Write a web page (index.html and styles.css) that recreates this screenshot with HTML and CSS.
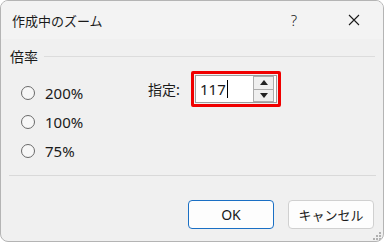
FILE: index.html
```html
<!DOCTYPE html>
<html>
<head>
  <title>作成中のズーム</title>
  <link rel="stylesheet" href="styles.css">
</head>
<body>

  <div class="window">
    <div class="titlebar">
      <span class="title">作成中のズーム</span>
      <span class="help">?</span>
      <span class="close">
        <svg width="12" height="12" viewBox="0 0 12 12"><path d="M1 1L11 11M11 1L1 11" stroke="#1a1a1a" stroke-width="1.1"/></svg>
      </span>
    </div>

    <div class="group-head">
      <span>倍率</span>
      <div class="group-line"></div>
    </div>

    <div class="options">
      <div class="radios">
        <div class="radio-row"><span class="radio"></span>200%</div>
        <div class="radio-row"><span class="radio"></span>100%</div>
        <div class="radio-row"><span class="radio"></span>75%</div>
      </div>
      <div class="custom">
        <span class="custom-label">指定:</span>
        <div class="highlight">
          <div class="spin">
            <div class="spin-text">117<span class="caret"></span></div>
            <div class="spin-btns">
              <div class="spin-btn"><svg width="8" height="5" viewBox="0 0 8 5"><path d="M0 5L4 0L8 5Z" fill="#222"/></svg></div>
              <div class="spin-btn"><svg width="8" height="5" viewBox="0 0 8 5"><path d="M0 0L4 5L8 0Z" fill="#222"/></svg></div>
            </div>
          </div>
        </div>
      </div>
    </div>

    <div class="separator"></div>

    <div class="buttons">
      <button class="btn primary">OK</button>
      <button class="btn">キャンセル</button>
    </div>

    <div class="grip">
      <svg width="10" height="10" viewBox="0 0 10 10" fill="#b0b0b0">
        <rect x="7" y="1" width="2" height="2"/>
        <rect x="4" y="4" width="2" height="2"/><rect x="7" y="4" width="2" height="2"/>
        <rect x="1" y="7" width="2" height="2"/><rect x="4" y="7" width="2" height="2"/><rect x="7" y="7" width="2" height="2"/>
      </svg>
    </div>
  </div>

</body>
</html>
```

FILE: styles.css
```css
body {
  margin: 0;
  font-family: 'Noto Sans', 'Noto Sans CJK JP', sans-serif;
  color: #1a1a1a;
  background: #ffffff;
}

.window {
  position: relative;
  width: 384px;
  height: 242px;
  box-sizing: border-box;
  border: 1px solid #b4b4b4;
  border-radius: 8px;
  background: #f0f0f0;
  overflow: hidden;
}

.titlebar {
  display: flex;
  align-items: center;
  height: 38px;
  padding-left: 11px;
  background: #f3f3f3;
}

.title {
  flex: 1;
  font-size: 13px;
  font-family: 'Noto Sans CJK JP', sans-serif;
}

.help {
  width: 46px;
  margin-right: 14px;
  text-align: center;
  font-size: 15px;
  font-weight: 300;
}

.close {
  display: flex;
  justify-content: center;
  align-items: center;
  width: 46px;
  margin-right: 6px;
}

.group-head {
  display: flex;
  align-items: center;
  height: 20px;
  margin-top: 7px;
  padding-left: 9px;
  padding-right: 8px;
  font-size: 14px;
  font-family: 'Noto Sans CJK JP', sans-serif;
}

.group-line {
  flex: 1;
  height: 1px;
  margin-left: 6px;
  background: #dcdcdc;
}

.options {
  display: flex;
  height: 104px;
  margin-top: 5px;
}

.radios {
  width: 127px;
  padding-top: 7px;
  padding-left: 20px;
}

.radio-row {
  display: flex;
  align-items: center;
  height: 29px;
  font-size: 15px;
}

.radio {
  width: 12px;
  height: 12px;
  margin-right: 10px;
  border: 1.3px solid #6a6a6a;
  border-radius: 50%;
  background: #f7f7f7;
}

.custom {
  display: flex;
  align-items: flex-start;
}

.custom-label {
  margin-top: 8px;
  width: 43px;
  font-size: 14px;
  font-family: 'Noto Sans CJK JP', sans-serif;
}

.highlight {
  width: 90px;
  height: 36px;
  box-sizing: border-box;
  border: 3px solid #f00000;
  border-radius: 2px;
  padding: 1px;
}

.spin {
  display: flex;
  align-items: center;
  height: 100%;
  box-sizing: border-box;
  border: 1px solid #9c9c9c;
  background: #ffffff;
  padding-left: 4px;
  padding-right: 2px;
}

.spin-text {
  flex: 1;
  display: flex;
  align-items: center;
  font-size: 15px;
}

.caret {
  display: inline-block;
  width: 1px;
  height: 18px;
  margin-left: 1px;
  background: #000000;
}

.spin-btns {
  display: flex;
  flex-direction: column;
  width: 19px;
  height: 24px;
  border: 1px solid #adadad;
}

.spin-btn {
  flex: 1;
  display: flex;
  justify-content: center;
  align-items: center;
  background: #efefef;
}

.spin-btn + .spin-btn {
  border-top: 1px solid #adadad;
}

.separator {
  height: 1px;
  margin: 0 7px 0 8px;
  background: #d9d9d9;
}

.buttons {
  display: flex;
  justify-content: flex-end;
  gap: 14px;
  margin-top: 24px;
  padding-right: 9px;
}

.btn {
  width: 86px;
  height: 29px;
  border: 1px solid #d0d0d0;
  border-radius: 4px;
  background: #fdfdfd;
  font-family: 'Noto Sans CJK JP', sans-serif;
  font-size: 13px;
  color: #1a1a1a;
  padding: 0;
}

.btn.primary {
  border-color: #1a6fc4;
  font-family: 'Noto Sans', sans-serif;
  font-size: 14px;
}

.grip {
  position: absolute;
  right: 1px;
  bottom: 0;
  line-height: 0;
}
```
